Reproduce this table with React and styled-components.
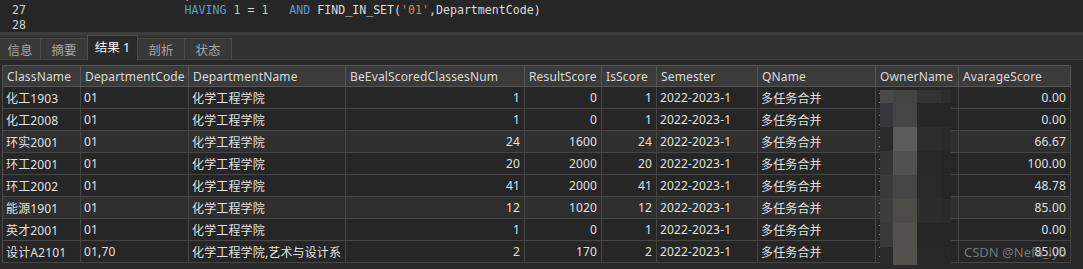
import React from "react";
import styled, { createGlobalStyle } from "styled-components";

const GlobalStyle = createGlobalStyle`
  html, body {
    margin: 0;
    padding: 0;
    background: #282828;
    overflow: hidden;
  }
  body {
    font-family: "Noto Sans", "Noto Sans CJK SC", sans-serif;
  }
`;

const columns = [
  { key: "cls", title: "ClassName", width: 78 },
  { key: "code", title: "DepartmentCode", width: 108 },
  { key: "dept", title: "DepartmentName", width: 157 },
  { key: "num", title: "BeEvalScoredClassesNum", width: 179, right: true },
  { key: "score", title: "ResultScore", width: 77, right: true },
  { key: "is", title: "IsScore", width: 55, right: true },
  { key: "sem", title: "Semester", width: 101 },
  { key: "q", title: "QName", width: 118 },
  { key: "owner", title: "OwnerName", width: 83 },
  { key: "avg", title: "AvarageScore", width: 112, right: true },
];

const rows = [
  ["化工1903", "01", "化学工程学院", "1", "0", "1", "2022-2023-1", "多任务合并", "", "0.00"],
  ["化工2008", "01", "化学工程学院", "1", "0", "1", "2022-2023-1", "多任务合并", "", "0.00"],
  ["环实2001", "01", "化学工程学院", "24", "1600", "24", "2022-2023-1", "多任务合并", "", "66.67"],
  ["环工2001", "01", "化学工程学院", "20", "2000", "20", "2022-2023-1", "多任务合并", "", "100.00"],
  ["环工2002", "01", "化学工程学院", "41", "2000", "41", "2022-2023-1", "多任务合并", "", "48.78"],
  ["能源1901", "01", "化学工程学院", "12", "1020", "12", "2022-2023-1", "多任务合并", "", "85.00"],
  ["英才2001", "01", "化学工程学院", "1", "0", "1", "2022-2023-1", "多任务合并", "", "0.00"],
  ["设计A2101", "01,70", "化学工程学院,艺术与设计系", "2", "170", "2", "2022-2023-1", "多任务合并", "", "85.00"],
];

// rows that show the lighter background in the capture
const lightRows = [2, 5];

const tabs = [
  { label: "信息", width: 41 },
  { label: "摘要", width: 47 },
  { label: "结果 1", width: 51, active: true },
  { label: "剖析", width: 47 },
  { label: "状态", width: 47 },
];

// pixelated blur over the OwnerName column
const mosaicX = [880, 893, 917, 941, 951];
const mosaicY = [90, 103, 127, 151, 175, 199, 223, 247, 265];
const mosaicColors = [
  ["#4a4a4a", "#444444", "#333333", "#2c2c2c"],
  ["#36383b", "#454545", "#262626", "#262626"],
  ["#2a2a2a", "#5a5a5a", "#2d2d2d", "#2a2a2a"],
  ["#343434", "#515151", "#292929", "#272727"],
  ["#3a3a3a", "#464646", "#2a2a2a", "#262626"],
  ["#3d3d3d", "#4d4b48", "#2c2c2c", "#2a2a2a"],
  ["#3a3a3a", "#53514d", "#262626", "#262626"],
  ["#2b2b2b", "#53514d", "#282828", "#282828"],
];

export default function App() {
  return (
    <Page>
      <GlobalStyle />
      <Editor>
        <Lines>
          <CodeLine>
            <LineNo>26</LineNo>
            <Code>{"                    )"}</Code>
          </CodeLine>
          <CodeLine>
            <LineNo>27</LineNo>
            <Code>
              {"                    "}
              <Kw>HAVING</Kw> <Num>1</Num> = <Num>1</Num>
              {"   "}
              <Kw>AND</Kw> FIND_IN_SET(<Str>'01'</Str>,DepartmentCode)
            </Code>
          </CodeLine>
          <CodeLine>
            <LineNo>28</LineNo>
            <Code />
          </CodeLine>
        </Lines>
      </Editor>
      <Separator />
      <TabBar>
        {tabs.map((t) => (
          <Tab key={t.label} $width={t.width} $active={t.active}>
            {t.label}
          </Tab>
        ))}
      </TabBar>
      <Content>
        <Grid>
          {columns.map((c) => (
            <HeadCell key={c.key}>{c.title}</HeadCell>
          ))}
          {rows.map((r, i) =>
            r.map((v, j) => (
              <Cell
                key={i + "-" + j}
                $right={columns[j].right}
                $light={lightRows.includes(i)}
              >
                {v}
              </Cell>
            ))
          )}
        </Grid>
        <Mosaic width="80" height="180" viewBox="878 88 80 180">
          {mosaicColors.map((row, ri) =>
            row.map((fill, ci) => (
              <rect
                key={ri + "-" + ci}
                x={mosaicX[ci]}
                y={mosaicY[ri]}
                width={mosaicX[ci + 1] - mosaicX[ci]}
                height={mosaicY[ri + 1] - mosaicY[ri]}
                fill={fill}
              />
            ))
          )}
          {rows.map((_, i) => (
            <g key={i} fill="#5b8fd2">
              <rect x="879" y={93 + i * 22} width="1" height="1" />
              <rect x="879" y={102 + i * 22} width="1" height="1" />
            </g>
          ))}
        </Mosaic>
        <Watermark>CSDN @Nefa_lyb</Watermark>
      </Content>
    </Page>
  );
}

const Page = styled.div`
  width: 1083px;
  height: 269px;
  overflow: hidden;
  background: #282828;
`;

const Editor = styled.div`
  height: 32px;
  overflow: hidden;
  background: #262626;
`;

const Lines = styled.div`
  margin-top: -12px;
`;

const CodeLine = styled.div`
  display: flex;
  height: 15px;
  line-height: 15px;
  font-family: "DejaVu Sans Mono", "Liberation Mono", monospace;
  font-size: 11.6px;
  color: #dcdcdc;
`;

const LineNo = styled.span`
  width: 26px;
  padding-left: 12px;
  color: #d0d0d0;
  box-sizing: content-box;
`;

const Code = styled.span`
  padding-left: 7px;
  white-space: pre;
`;

const Kw = styled.span`
  color: #569cd6;
`;

const Num = styled.span`
  color: #a6d98c;
`;

const Str = styled.span`
  color: #d6855f;
`;

const Separator = styled.div`
  height: 3px;
  background: #3c3c3c;
`;

const TabBar = styled.div`
  display: flex;
  align-items: flex-end;
  height: 24px;
  background: #323232;
  border-bottom: 1px solid #404040;
`;

const Tab = styled.div`
  box-sizing: border-box;
  width: ${(p) => p.$width}px;
  height: ${(p) => (p.$active ? 25 : 21)}px;
  margin-bottom: ${(p) => (p.$active ? -1 : 0)}px;
  display: flex;
  align-items: center;
  justify-content: center;
  padding-bottom: ${(p) => (p.$active ? 3 : 0)}px;
  font-size: 12.5px;
  color: ${(p) => (p.$active ? "#f2f2f2" : "#a6a6a6")};
  background: ${(p) => (p.$active ? "#2a2a2a" : "#383838")};
  border-right: 1px solid #4a4a4a;
  border-top: 1px solid ${(p) => (p.$active ? "#4e4e4e" : "#444444")};
  ${(p) => p.$active && "border-left: 1px solid #4e4e4e; margin-left: -1px;"}
`;

const Content = styled.div`
  position: relative;
  padding: 5px 0 0 2px;
  height: 204px;
  background: #292929;
`;

const Grid = styled.div`
  display: grid;
  grid-template-columns: ${columns.map((c) => c.width + "px").join(" ")};
  width: max-content;
  border-left: 1px solid #4a4a4a;
  border-top: 1px solid #555555;
  font-size: 12px;
  letter-spacing: 0.15px;
`;

const HeadCell = styled.div`
  box-sizing: border-box;
  height: 21px;
  padding: 0 3px 0 4px;
  display: flex;
  align-items: center;
  white-space: nowrap;
  overflow: hidden;
  background: #3b3b3b;
  color: #d9d9d9;
  border-right: 1px solid #545454;
  border-bottom: 1px solid #555555;
`;

const Cell = styled.div`
  box-sizing: border-box;
  height: 22px;
  padding: 0 4px 0 3px;
  display: flex;
  align-items: center;
  justify-content: ${(p) => (p.$right ? "flex-end" : "flex-start")};
  white-space: nowrap;
  overflow: hidden;
  background: ${(p) => (p.$light ? "#2f2f2f" : "#262626")};
  color: #e0e0e0;
  border-right: 1px solid #444444;
  border-bottom: 1px solid #464646;
`;

const Mosaic = styled.svg`
  position: absolute;
  left: 878px;
  top: 28px;
  display: block;
`;

const Watermark = styled.div`
  position: absolute;
  left: 964px;
  top: 183px;
  font-size: 13px;
  line-height: 18px;
  color: rgba(170, 170, 170, 0.62);
  white-space: nowrap;
  pointer-events: none;
`;
